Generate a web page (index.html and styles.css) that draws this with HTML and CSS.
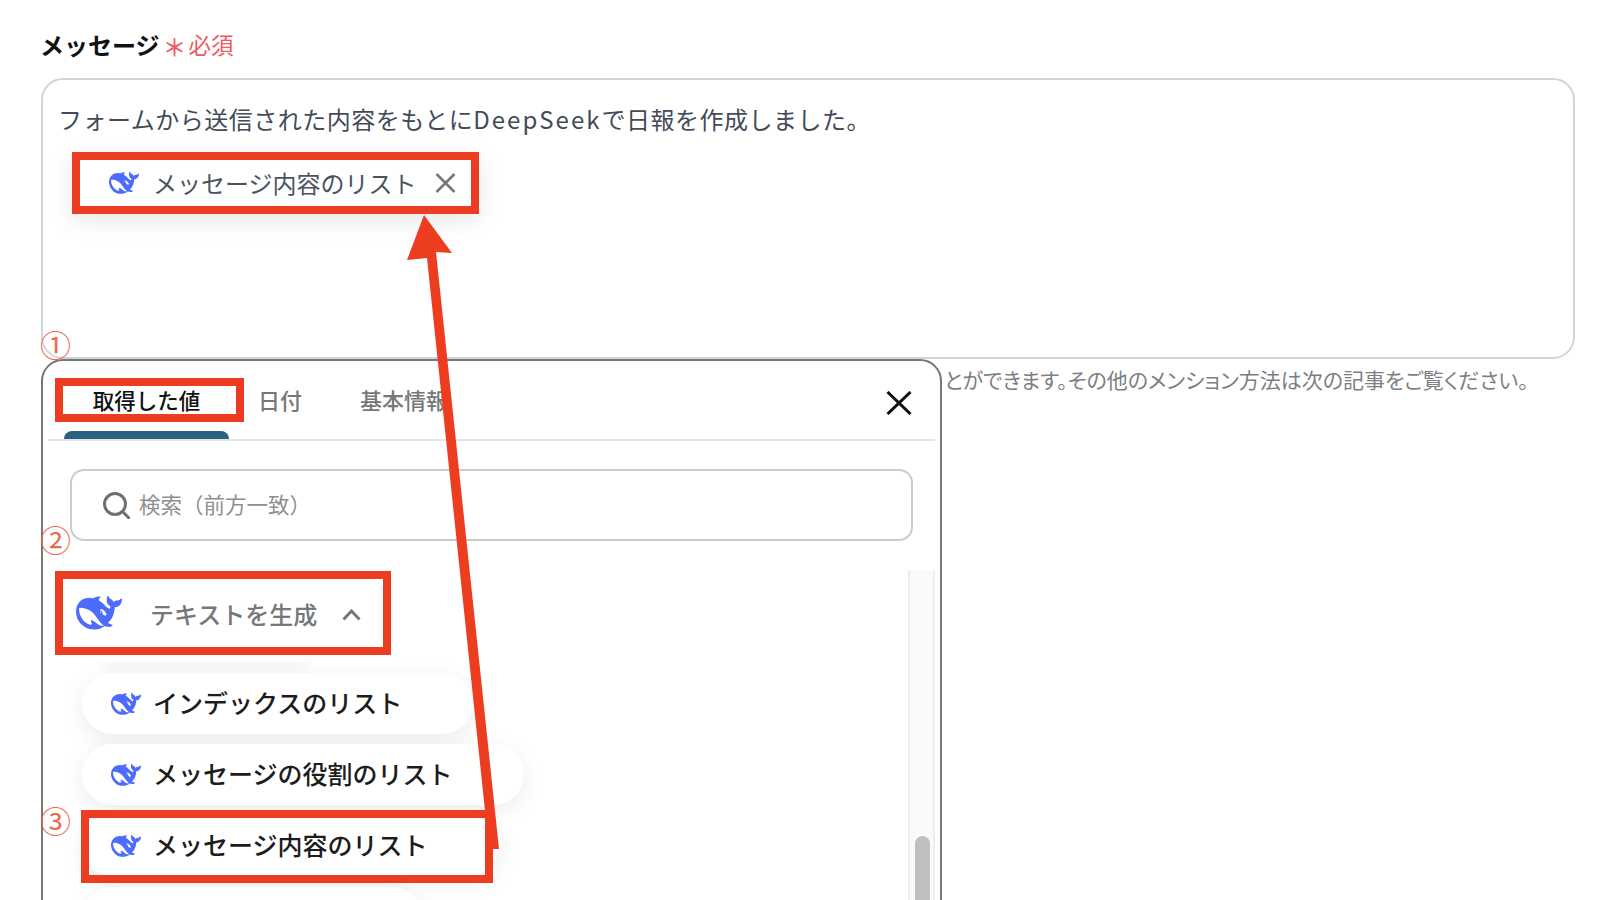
FILE: index.html
```html
<!DOCTYPE html>
<html lang="ja">
<head>
    <meta charset="UTF-8">
    <meta name="viewport" content="width=device-width, initial-scale=1.0">
    <title>メッセージ</title>
    <link rel="stylesheet" href="styles.css">
</head>
<body>
    <svg class="icon-defs" aria-hidden="true">
        <symbol id="whale" viewBox="0 0 24 24">
            <path fill-rule="evenodd" d="M23.748 4.482c-.254-.124-.364.113-.512.234-.051.039-.094.09-.137.136-.372.397-.806.657-1.373.626-.829-.046-1.537.214-2.163.848-.133-.782-.575-1.248-1.247-1.548-.352-.156-.708-.311-.955-.65-.172-.241-.219-.51-.305-.774-.055-.16-.11-.323-.293-.35-.2-.031-.278.136-.356.276-.313.572-.434 1.202-.422 1.84.027 1.436.633 2.58 1.838 3.393.137.093.172.187.129.323-.082.28-.18.552-.266.833-.055.179-.137.217-.329.14a5.526 5.526 0 01-1.736-1.18c-.857-.828-1.631-1.742-2.597-2.458a11.365 11.365 0 00-.689-.471c-.985-.957.13-1.743.388-1.836.27-.098.093-.432-.779-.428-.872.004-1.67.295-2.687.684a3.055 3.055 0 01-.465.137 9.597 9.597 0 00-2.883-.102c-1.885.21-3.39 1.102-4.497 2.623C.082 8.606-.231 10.684.152 12.85c.403 2.284 1.569 4.175 3.36 5.653 1.858 1.533 3.997 2.284 6.438 2.14 1.482-.085 3.133-.284 4.994-1.86.47.234.962.327 1.78.397.63.059 1.236-.03 1.705-.128.735-.156.684-.837.419-.961-2.155-1.004-1.682-.595-2.113-.926 1.096-1.296 2.746-2.642 3.392-7.003.05-.347.007-.565 0-.845-.004-.17.035-.237.23-.256a4.173 4.173 0 001.545-.475c1.396-.763 1.96-2.015 2.093-3.517.02-.23-.004-.467-.247-.588zM11.581 18c-2.089-1.642-3.102-2.183-3.52-2.16-.392.024-.321.471-.235.763.09.288.207.486.371.739.114.167.192.416-.113.603-.673.416-1.842-.14-1.897-.167-1.361-.802-2.5-1.86-3.301-3.307-.774-1.393-1.224-2.887-1.298-4.482-.02-.386.093-.522.477-.592a4.696 4.696 0 011.529-.039c2.132.312 3.946 1.265 5.468 2.774.868.86 1.525 1.887 2.202 2.891.72 1.066 1.494 2.082 2.48 2.914.348.292.625.514.891.677-.802.09-2.14.11-3.054-.614zm1-6.44a.306.306 0 01.415-.287.302.302 0 01.2.288.306.306 0 01-.31.307.303.303 0 01-.304-.308zm3.11 1.596c-.2.081-.399.151-.59.16a1.245 1.245 0 01-.798-.254c-.274-.23-.47-.358-.552-.758a1.73 1.73 0 01.016-.588c.07-.327-.008-.537-.239-.727-.187-.156-.426-.199-.688-.199a.559.559 0 01-.254-.078c-.11-.054-.2-.19-.114-.358.028-.054.16-.186.192-.21.356-.202.767-.136 1.146.016.352.144.618.408 1.001.782.391.451.462.576.685.914.176.265.336.537.445.848.067.195-.019.354-.25.452z"/>
        </symbol>
    </svg>

    <div class="page">
        <div class="field-head">
            <span class="field-label">メッセージ</span>
            <span class="required-mark">＊</span>
            <span class="required-text">必須</span>
        </div>

        <div class="message-box">
            <p class="message-line">フォームから送信された内容をもとに<span class="message-latin">DeepSeek</span>で日報を作成しました。</p>
            <div class="chip">
                <svg class="whale-small"><use href="#whale"/></svg>
                <span class="chip-text">メッセージ内容のリスト</span>
                <svg class="chip-close" viewBox="0 0 21 20">
                    <path d="M1.5 1 L19.5 19 M19.5 1 L1.5 19"/>
                </svg>
            </div>
        </div>

        <p class="help-text">とができます。その他のメンション方法は次の記事をご覧ください。</p>

        <!-- popover sits over the message box -->
        <div class="popover">
            <div class="tabs">
                <div class="tab-col">
                    <div class="tab-active">取得した値</div>
                    <div class="tab-bar"></div>
                </div>
                <div class="tab">日付</div>
                <div class="tab tab-second">基本情報</div>
                <svg class="popover-close" viewBox="0 0 26 24">
                    <path d="M1.5 1 L24.5 23 M24.5 1 L1.5 23"/>
                </svg>
            </div>

            <div class="search">
                <svg class="search-icon" viewBox="0 0 27 27">
                    <circle cx="12" cy="12" r="10.5"/>
                    <path d="M19.5 19.5 L26 26"/>
                </svg>
                <span class="search-text">検索（前方一致）</span>
            </div>

            <div class="tree">
                <div class="tree-list">
                    <div class="group-head">
                        <svg class="whale-big"><use href="#whale"/></svg>
                        <span class="group-title">テキストを生成</span>
                        <svg class="chevron" viewBox="0 0 19 12">
                            <path d="M1.5 10.5 L9.5 2 L17.5 10.5"/>
                        </svg>
                    </div>
                    <div class="pill-peek"></div>
                    <div class="pill">
                        <svg class="whale-small"><use href="#whale"/></svg>
                        <span class="pill-text">インデックスのリスト</span>
                    </div>
                    <div class="pill">
                        <svg class="whale-small"><use href="#whale"/></svg>
                        <span class="pill-text">メッセージの役割のリスト</span>
                    </div>
                    <div class="pill pill-marked">
                        <svg class="whale-small"><use href="#whale"/></svg>
                        <span class="pill-text">メッセージ内容のリスト</span>
                    </div>
                    <div class="pill pill-last"></div>
                </div>
                <div class="scrollbar">
                    <div class="scroll-thumb"></div>
                </div>
            </div>
        </div>

        <!-- annotations on top of the screenshot -->
        <span class="step step-1">①</span>
        <span class="step step-2">②</span>
        <span class="step step-3">③</span>
        <svg class="arrow" viewBox="0 0 1600 900">
            <polygon points="424,215 452,253 436,252 499,849 489,849 427,258 407,260"/>
        </svg>
    </div>
</body>
</html>
```

FILE: styles.css
```css
:root {
    --mark-red: #ec3d21;
    --whale-blue: #4d6bfe;
    --gray-text: #777777;
}

html, body {
    margin: 0;
    padding: 0;
    background: #ffffff;
    font-family: "Noto Sans CJK JP", "Noto Sans", sans-serif;
}

.icon-defs {
    display: none;
}

.page {
    position: relative;
    width: 1600px;
    height: 900px;
    overflow: hidden;
}

.field-head {
    display: flex;
    align-items: center;
    box-sizing: border-box;
    height: 78px;
    padding: 10px 0 0 40px;
}

.field-label {
    font-size: 24px;
    font-weight: 700;
    color: #111111;
}

.required-mark {
    width: 24px;
    margin-left: 3px;
    font-size: 24px;
    font-weight: 500;
    line-height: 36px;
    padding-top: 4px;
    text-align: center;
    color: #ee5a63;
}

.required-text {
    margin-left: 2px;
    font-size: 22.5px;
    color: #ee5a63;
}

.message-box {
    box-sizing: border-box;
    height: 281px;
    margin: 0 25px 0 41px;
    padding: 21px 15px;
    border: 2px solid #cfd5de;
    border-radius: 22px;
}

.message-line {
    margin: 0;
    font-size: 24px;
    line-height: 36px;
    letter-spacing: 0.5px;
    color: #434b59;
    white-space: nowrap;
}

.message-latin {
    letter-spacing: 2px;
}

.chip {
    display: flex;
    align-items: center;
    box-sizing: border-box;
    width: 407px;
    height: 62px;
    margin: 15px 0 0 14px;
    padding-left: 29px;
    border: 8px solid var(--mark-red);
    background: #ffffff;
    box-shadow: 0 6px 24px rgba(0, 0, 0, 0.1);
}

.chip-text {
    margin-left: 14px;
    padding-bottom: 1px;
    font-size: 24px;
    color: #4b5361;
    white-space: nowrap;
}

.chip-close {
    width: 21px;
    height: 20px;
    margin-left: 18px;
    fill: none;
    stroke: #777777;
    stroke-width: 2.5;
}

.whale-small {
    flex: none;
    width: 30px;
    height: 30px;
    fill: var(--whale-blue);
}

.whale-big {
    flex: none;
    width: 46px;
    height: 46px;
    fill: var(--whale-blue);
}

.help-text {
    margin: 2px 0 0;
    padding-left: 944px;
    font-size: 21px;
    line-height: 36px;
    font-feature-settings: "palt";
    color: #7b7f86;
    white-space: nowrap;
}

.popover {
    position: absolute;
    top: 359px;
    left: 41px;
    box-sizing: border-box;
    width: 901px;
    height: 620px;
    border: 2px solid #777777;
    border-radius: 22px 22px 0 0;
    background: #ffffff;
}

.tabs {
    display: flex;
    align-items: flex-start;
    box-sizing: border-box;
    height: 80px;
    margin: 0 5px;
    padding: 17px 0 0 7px;
    border-bottom: 2px solid #e4e4e4;
}

.tab-active {
    box-sizing: border-box;
    width: 189px;
    height: 44px;
    padding-right: 6px;
    border: 8px solid var(--mark-red);
    font-size: 21.5px;
    font-weight: 500;
    line-height: 27px;
    text-align: center;
    color: #111111;
}

.tab-bar {
    height: 8px;
    margin: 9px 15px 0 9px;
    border-radius: 8px 8px 0 0;
    background: #2a6380;
}

.tab {
    margin-left: 14px;
    font-size: 22px;
    font-weight: 500;
    line-height: 42px;
    color: var(--gray-text);
    white-space: nowrap;
}

.tab-second {
    margin-left: 58px;
}

.popover-close {
    width: 26px;
    height: 24px;
    margin: 13px 23px 0 auto;
    fill: none;
    stroke: #111111;
    stroke-width: 3;
}

.search {
    display: flex;
    align-items: center;
    box-sizing: border-box;
    width: 843px;
    height: 72px;
    margin: 28px 0 0 27px;
    padding-left: 31px;
    border: 2px solid #cccccc;
    border-radius: 14px;
}

.search-icon {
    width: 27px;
    height: 27px;
    fill: none;
    stroke: #6f6f6f;
    stroke-width: 3;
    stroke-linecap: round;
}

.search-text {
    margin-left: 9px;
    padding-bottom: 3px;
    font-size: 21.5px;
    color: #8f8f8f;
    white-space: nowrap;
}

.tree {
    display: flex;
    margin-top: 29px;
}

.tree-list {
    display: flex;
    flex-direction: column;
    align-items: flex-start;
    padding: 1px 0 0 12px;
}

.group-head {
    position: relative;
    z-index: 1;
    display: flex;
    align-items: center;
    box-sizing: border-box;
    width: 336px;
    height: 84px;
    padding-left: 13px;
    border: 8px solid var(--mark-red);
    background: #ffffff;
}

.group-title {
    margin-left: 28px;
    font-size: 24px;
    font-weight: 500;
    color: var(--gray-text);
    white-space: nowrap;
}

.chevron {
    width: 19px;
    height: 12px;
    margin: 4px 0 0 25px;
    fill: none;
    stroke: var(--gray-text);
    stroke-width: 3;
}

.pill-peek {
    width: 210px;
    height: 7px;
    margin-left: 45px;
    border-radius: 0 0 20px 20px;
    background: #ffffff;
    box-shadow: 0 5px 14px rgba(0, 0, 0, 0.08);
}

.pill {
    position: relative;
    display: flex;
    align-items: center;
    box-sizing: border-box;
    height: 61px;
    margin: 10px 0 0 27px;
    padding: 0 71px 0 29px;
    border-radius: 31px;
    background: #ffffff;
    box-shadow: 0 6px 22px rgba(0, 0, 0, 0.08);
}

.pill-peek + .pill {
    margin-top: 11px;
}

.pill-text {
    margin-left: 12px;
    font-size: 25px;
    font-weight: 500;
    line-height: 36px;
    padding-bottom: 3px;
    color: #1c1c1c;
    white-space: nowrap;
}

.pill-marked::after {
    content: "";
    position: absolute;
    top: -5px;
    left: -1px;
    right: 6px;
    bottom: -7px;
    border: 8px solid var(--mark-red);
}

.pill-last {
    width: 340px;
    margin-top: 11px;
}

.scrollbar {
    box-sizing: border-box;
    width: 27px;
    height: 340px;
    margin: 0 5px 0 auto;
    padding: 266px 0 0 5px;
    border-left: 2px solid #eeeeee;
    border-right: 2px solid #eeeeee;
    background: #fafafa;
}

.scroll-thumb {
    width: 15px;
    height: 80px;
    border-radius: 8px 8px 0 0;
    background: #c0c0c0;
}

.step {
    position: absolute;
    left: 40px;
    font-size: 31px;
    line-height: 30px;
    color: #ee6a4c;
}

.step-1 {
    top: 329px;
}

.step-2 {
    top: 524px;
}

.step-3 {
    top: 805px;
}

.arrow {
    position: absolute;
    top: 0;
    left: 0;
    width: 1600px;
    height: 900px;
    fill: var(--mark-red);
    pointer-events: none;
}
```
